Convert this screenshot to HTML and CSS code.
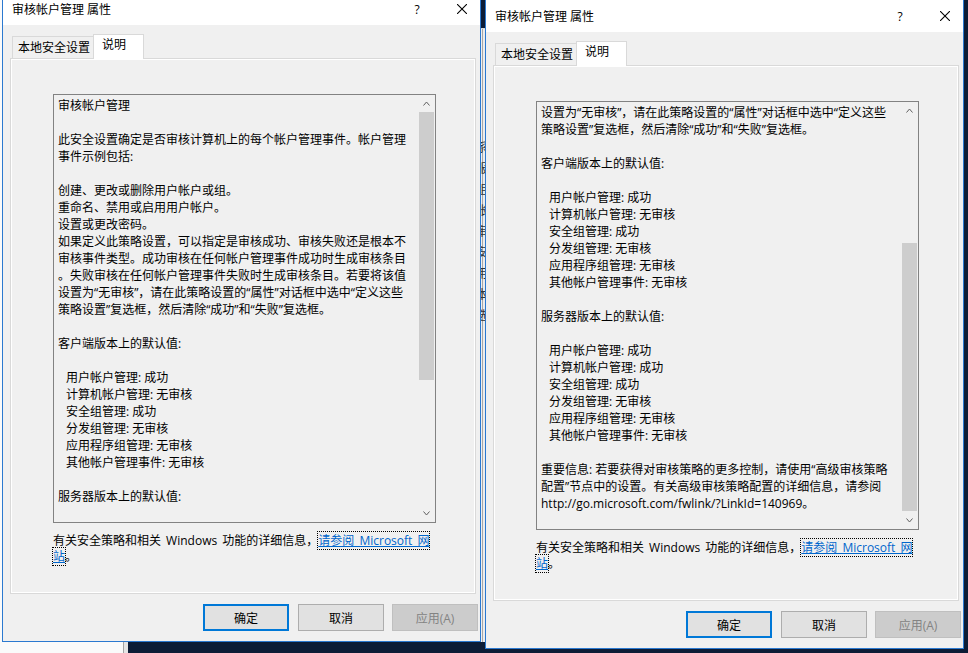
FILE: index.html
```html
<!DOCTYPE html>
<html lang="zh-CN">
<head>
<meta charset="utf-8">
<title>审核帐户管理 属性</title>
<link rel="stylesheet" href="styles.css">
</head>
<body>
<div class="desktop">
  <div class="bgwin bgwin-a"></div>
  <div class="bgwin bgwin-b">
    <div class="bg-lines">
      <div>系统</div><div>服务</div><div>组策</div><div>帐户</div><div>审核</div><div>安全</div><div>用户</div><div>本地</div><div>选项</div>
    </div>
  </div>

  <div class="win win-left">
    <div class="titlebar">
      <span class="title">审核帐户管理 属性</span>
      <span class="help">?</span>
      <span class="close"><svg width="10" height="10" viewBox="0 0 10 10"><path d="M0 0 L10 10 M10 0 L0 10" stroke="#000" stroke-width="1.1" fill="none"/></svg></span>
    </div>
    <div class="wbody">
      <div class="tabs">
        <div class="tab">本地安全设置</div>
        <div class="tab active">说明</div>
      </div>
      <div class="panel">
        <div class="textbox">
          <div class="text">
            <div class="ln">审核帐户管理</div>
            <div class="ln"></div>
            <div class="ln">此安全设置确定是否审核计算机上的每个帐户管理事件。帐户管理</div>
            <div class="ln">事件示例包括:</div>
            <div class="ln"></div>
            <div class="ln">创建、更改或删除用户帐户或组。</div>
            <div class="ln">重命名、禁用或启用用户帐户。</div>
            <div class="ln">设置或更改密码。</div>
            <div class="ln">如果定义此策略设置，可以指定是审核成功、审核失败还是根本不</div>
            <div class="ln">审核事件类型。成功审核在任何帐户管理事件成功时生成审核条目</div>
            <div class="ln">。失败审核在任何帐户管理事件失败时生成审核条目。若要将该值</div>
            <div class="ln">设置为“无审核”，请在此策略设置的“属性”对话框中选中“定义这些</div>
            <div class="ln">策略设置”复选框，然后清除“成功”和“失败”复选框。</div>
            <div class="ln"></div>
            <div class="ln">客户端版本上的默认值:</div>
            <div class="ln"></div>
            <div class="ln ind">用户帐户管理: 成功</div>
            <div class="ln ind">计算机帐户管理: 无审核</div>
            <div class="ln ind">安全组管理: 成功</div>
            <div class="ln ind">分发组管理: 无审核</div>
            <div class="ln ind">应用程序组管理: 无审核</div>
            <div class="ln ind">其他帐户管理事件: 无审核</div>
            <div class="ln"></div>
            <div class="ln">服务器版本上的默认值:</div>
          </div>
          <div class="scrollbar">
            <div class="sb-arrow"><svg width="7" height="5" viewBox="0 0 7 5"><polyline points="0.5,4.5 3.5,1 6.5,4.5" fill="none" stroke="#606060" stroke-width="1"/></svg></div>
            <div class="sb-track"><div class="sb-thumb thumb-top"></div></div>
            <div class="sb-arrow"><svg width="7" height="5" viewBox="0 0 7 5"><polyline points="0.5,0.5 3.5,4 6.5,0.5" fill="none" stroke="#606060" stroke-width="1"/></svg></div>
          </div>
        </div>
        <div class="footer">
          <div class="fl">有关安全策略和相关 Windows 功能的详细信息，<span class="link">请参阅 Microsoft 网</span></div>
          <div class="fl"><span class="link">站</span>。</div>
        </div>
      </div>
      <div class="buttons">
        <div class="btn btn-ok">确定</div>
        <div class="btn">取消</div>
        <div class="btn btn-off">应用(A)</div>
      </div>
    </div>
  </div>

  <div class="win win-right">
    <div class="titlebar">
      <span class="title">审核帐户管理 属性</span>
      <span class="help">?</span>
      <span class="close"><svg width="10" height="10" viewBox="0 0 10 10"><path d="M0 0 L10 10 M10 0 L0 10" stroke="#000" stroke-width="1.1" fill="none"/></svg></span>
    </div>
    <div class="wbody">
      <div class="tabs">
        <div class="tab">本地安全设置</div>
        <div class="tab active">说明</div>
      </div>
      <div class="panel">
        <div class="textbox">
          <div class="text">
            <div class="ln">设置为“无审核”，请在此策略设置的“属性”对话框中选中“定义这些</div>
            <div class="ln">策略设置”复选框，然后清除“成功”和“失败”复选框。</div>
            <div class="ln"></div>
            <div class="ln">客户端版本上的默认值:</div>
            <div class="ln"></div>
            <div class="ln ind">用户帐户管理: 成功</div>
            <div class="ln ind">计算机帐户管理: 无审核</div>
            <div class="ln ind">安全组管理: 成功</div>
            <div class="ln ind">分发组管理: 无审核</div>
            <div class="ln ind">应用程序组管理: 无审核</div>
            <div class="ln ind">其他帐户管理事件: 无审核</div>
            <div class="ln"></div>
            <div class="ln">服务器版本上的默认值:</div>
            <div class="ln"></div>
            <div class="ln ind">用户帐户管理: 成功</div>
            <div class="ln ind">计算机帐户管理: 成功</div>
            <div class="ln ind">安全组管理: 成功</div>
            <div class="ln ind">分发组管理: 无审核</div>
            <div class="ln ind">应用程序组管理: 无审核</div>
            <div class="ln ind">其他帐户管理事件: 无审核</div>
            <div class="ln"></div>
            <div class="ln">重要信息: 若要获得对审核策略的更多控制，请使用“高级审核策略</div>
            <div class="ln">配置”节点中的设置。有关高级审核策略配置的详细信息，请参阅</div>
            <div class="ln">http://go.microsoft.com/fwlink/?LinkId=140969。</div>
          </div>
          <div class="scrollbar">
            <div class="sb-arrow"><svg width="7" height="5" viewBox="0 0 7 5"><polyline points="0.5,4.5 3.5,1 6.5,4.5" fill="none" stroke="#606060" stroke-width="1"/></svg></div>
            <div class="sb-track"><div class="sb-thumb thumb-bottom"></div></div>
            <div class="sb-arrow"><svg width="7" height="5" viewBox="0 0 7 5"><polyline points="0.5,0.5 3.5,4 6.5,0.5" fill="none" stroke="#606060" stroke-width="1"/></svg></div>
          </div>
        </div>
        <div class="footer">
          <div class="fl">有关安全策略和相关 Windows 功能的详细信息，<span class="link">请参阅 Microsoft 网</span></div>
          <div class="fl"><span class="link">站</span>。</div>
        </div>
      </div>
      <div class="buttons">
        <div class="btn btn-ok">确定</div>
        <div class="btn">取消</div>
        <div class="btn btn-off">应用(A)</div>
      </div>
    </div>
  </div>
</div>
</body>
</html>
```
FILE: styles.css
```css
* { box-sizing: border-box; }
html, body { margin: 0; padding: 0; }
body {
  width: 968px;
  height: 653px;
  overflow: hidden;
  background: #0c1c36;
  font-family: "Open Sans", "Noto Sans CJK SC", sans-serif;
  font-size: 12px;
  color: #000;
}
.desktop {
  position: relative;
  width: 968px;
  height: 653px;
  overflow: hidden;
  background: #0c1c36;
}

/* background windows peeking through */
.bgwin { position: absolute; }
.bgwin-a {
  left: -10px;
  top: -10px;
  width: 138px;
  height: 700px;
  background: linear-gradient(to right, #fafafa 0, #fafafa 133px, #a3a3a3 133px, #a3a3a3 134px, #e4e4e4 134px);
}
.bgwin-b {
  left: 470px;
  top: 28px;
  width: 40px;
  height: 614px;
  background: linear-gradient(to right, #f0f0f0 0, #f0f0f0 12px, #a8a8a8 12px, #a8a8a8 13px, #ececec 13px);
  border-top: 1px solid #d8d8d8;
}
.bg-lines {
  padding: 108px 0 0 6px;
  font-size: 12px;
  line-height: 21px;
  color: #333;
}

/* dialog windows */
.win {
  position: absolute;
  width: 479px;
  height: 649px;
  background: #f0f0f0;
  border: 1px solid #2b79d0;
  border-top: none;
  display: flex;
  flex-direction: column;
}
.win-left { left: 2px; top: -7px; }
.win-right { left: 485px; top: 0; }

.titlebar {
  flex: none;
  height: 32px;
  background: #fff;
  display: flex;
  align-items: center;
  padding: 0 8px 0 9px;
}
.title { flex: 1; line-height: 17px; white-space: nowrap; }
.help {
  width: 20px;
  text-align: center;
  font-size: 12px;
  line-height: 17px;
  margin-right: 25px;
}
.close {
  width: 20px;
  height: 10px;
  display: flex;
  justify-content: center;
}
.close svg { display: block; }

.wbody {
  flex: 1;
  display: flex;
  flex-direction: column;
  padding: 9px 4px 10px 7px;
}

.tabs {
  flex: none;
  height: 24px;
  display: flex;
  align-items: flex-end;
  padding-left: 2px;
  position: relative;
  z-index: 1;
}
.tab {
  width: 82px;
  height: 22px;
  padding-left: 5px;
  border: 1px solid #d9d9d9;
  border-bottom: none;
  background: #f0f0f0;
  line-height: 21px;
  white-space: nowrap;
}
.tab.active {
  width: 51px;
  height: 25px;
  margin-bottom: -1px;
  margin-left: -1px;
  padding-left: 8px;
  background: #fff;
  line-height: 20px;
}

.panel {
  flex: none;
  height: 536px;
  border: 1px solid #d9d9d9;
  box-shadow: inset 0 0 0 1px #fff;
  padding: 35px 0 0 42px;
}

.textbox {
  width: 383px;
  height: 429px;
  border: 1px solid #828282;
  background: #f0f0f0;
  display: flex;
}
.text {
  flex: 1;
  overflow: hidden;
  padding: 2px 0 0 4px;
}
.ln {
  height: 17px;
  line-height: 17px;
  white-space: nowrap;
}
.ln.ind { padding-left: 8px; }

.scrollbar {
  flex: none;
  width: 17px;
  display: flex;
  flex-direction: column;
  background: #f0f0f0;
}
.sb-arrow {
  flex: none;
  height: 17px;
  display: flex;
  align-items: center;
  justify-content: center;
}
.sb-arrow svg { display: block; }
.sb-track {
  flex: 1;
  display: flex;
  flex-direction: column;
  padding: 0 1px;
}
.sb-thumb {
  height: 268px;
  background: #cdcdcd;
}
.thumb-top { margin-top: 0; }
.thumb-bottom { margin-top: 124px; }

.footer {
  margin-top: 10px;
}
.fl {
  height: 16px;
  line-height: 16px;
  white-space: nowrap;
  word-spacing: 2px;
}
.link {
  color: #0066cc;
  text-decoration: underline;
  outline: 1px dotted #000;
  outline-offset: 0;
}

.buttons {
  flex: none;
  display: flex;
  justify-content: flex-end;
  margin: 10px -2px 0 0;
}
.btn {
  width: 86px;
  height: 27px;
  background: #e1e1e1;
  border: 1px solid #adadad;
  display: flex;
  align-items: center;
  justify-content: center;
  white-space: nowrap;
}
.btn + .btn { margin-left: 8px; }
.btn-ok {
  border: 2px solid #0078d7;
  margin-right: 1px;
}
.btn-off {
  background: #cccccc;
  border-color: #bfbfbf;
  color: #838383;
}
```
